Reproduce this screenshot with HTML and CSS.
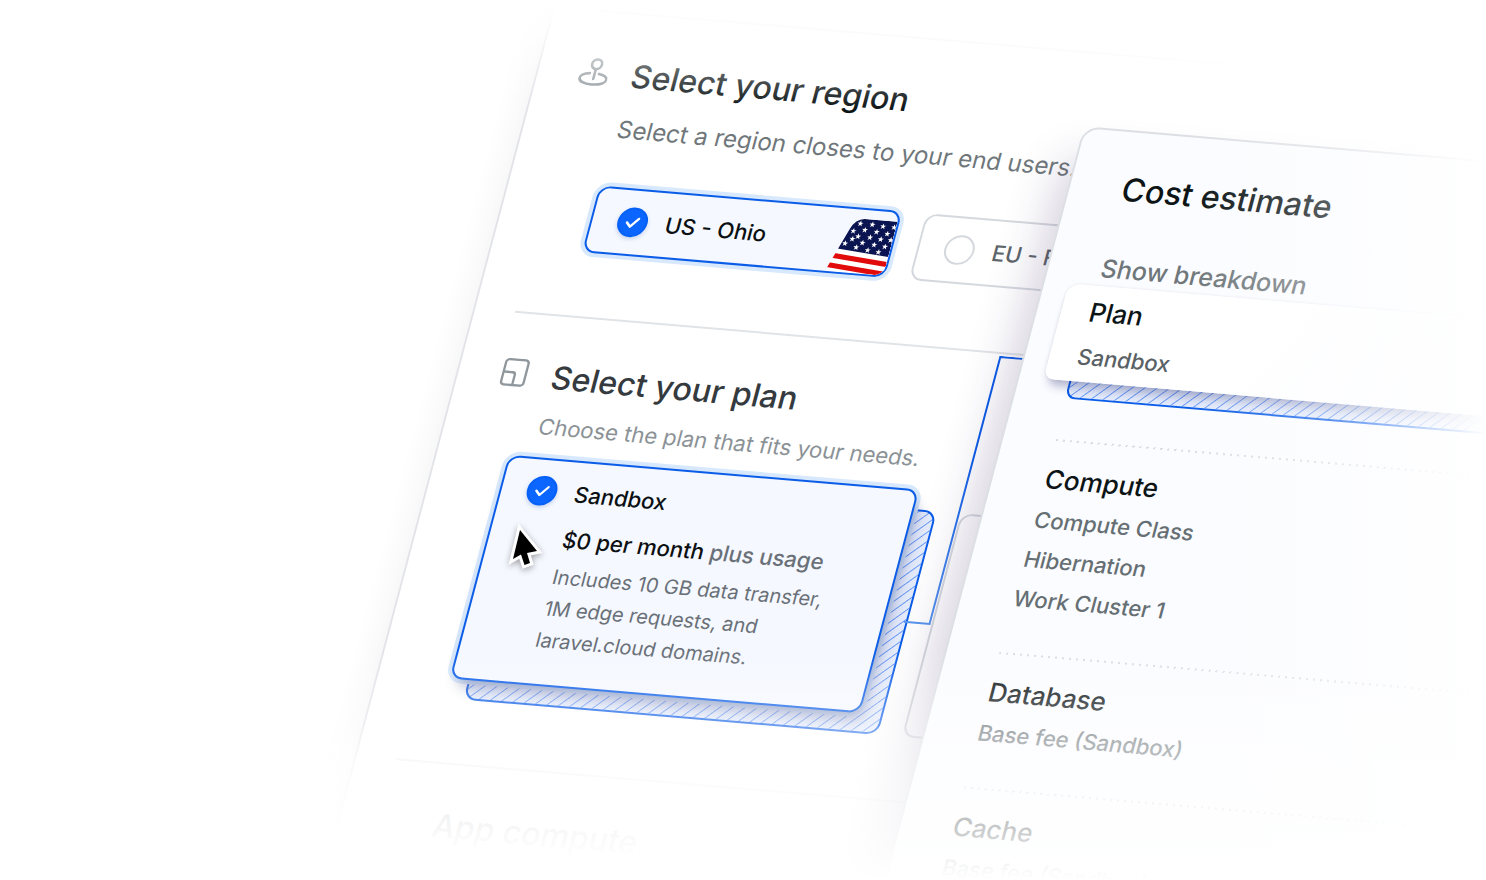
FILE: index.html
```
<!DOCTYPE html>
<html lang="en">
<head>
  <meta charset="UTF-8">
  <meta name="viewport" content="width=device-width, initial-scale=1.0">
  <title>Create environment</title>
  <link rel="stylesheet" href="styles.css">
</head>
<body>
  <div class="scene">

    <main class="plane">
      <form class="setup">
        <section class="step">
          <svg class="step-icon" viewBox="0 0 28 28" fill="none" stroke="#8f979c" stroke-width="2.4" stroke-linecap="round">
            <circle cx="15" cy="7" r="4.600"/>
            <path d="M15 12v9"/>
            <path d="M10.500 15.800C5.500 16.500 2.200 18.400 2.200 20.900c0 3.200 5.400 5.300 12.500 5.300s12.500-2.100 12.500-5.300c0-2.500-3.200-4.400-8.200-5.100"/>
          </svg>
          <div class="step-body">
            <h2>Select your region</h2>
            <p class="hint hint-large">Select a region closes to your end users.</p>
            <div class="cards">
              <label class="card region selected">
                <span class="radio">
                  <input type="radio" name="region" checked>
                  <svg viewBox="0 0 30 30" fill="none" stroke="#fff" stroke-width="2.4" stroke-linecap="round" stroke-linejoin="round"><path d="M9.500 15.500l4 4 7-8.500"/></svg>
                </span>
                <span class="name">US - Ohio</span>
                <svg class="flag" viewBox="0 0 60 58">
                  <defs>
                    <path id="star" d="M0-3.200L.8-1 3-1 1.200.4 1.900 2.600 0 1.300-1.900 2.600-1.200.4-3-1-.8-1z" fill="#fff"/>
                    <clipPath id="flag-shape"><path d="M2 56L15 14Q18 4 27 3L60 3V58H2Z"/></clipPath>
                  </defs>
                  <g clip-path="url(#flag-shape)">
                    <path fill="#fff" d="M0 0h60v58H0z"/>
                    <path fill="#0a1450" d="M0 0h60v39L0 34z"/>
                    <path fill="#e20b0b" d="M0 39l60 5v5L0 44zM0 49l60 5v5L0 54z"/>
                    <g>
                      <use href="#star" x="24" y="8"/><use href="#star" x="36" y="8"/><use href="#star" x="47" y="9"/><use href="#star" x="58" y="9"/>
                      <use href="#star" x="19" y="16"/><use href="#star" x="30" y="14"/><use href="#star" x="42" y="15"/><use href="#star" x="53" y="16"/>
                      <use href="#star" x="25" y="21"/><use href="#star" x="37" y="21"/><use href="#star" x="48" y="22"/><use href="#star" x="58" y="22"/>
                      <use href="#star" x="14" y="29"/><use href="#star" x="20" y="24"/><use href="#star" x="31" y="27"/><use href="#star" x="43" y="28"/><use href="#star" x="54" y="29"/>
                      <use href="#star" x="26" y="32"/><use href="#star" x="38" y="34"/><use href="#star" x="49" y="35"/>
                    </g>
                  </g>
                </svg>
              </label>
              <label class="card region">
                <span class="radio">
                  <input type="radio" name="region">
                </span>
                <span class="name">EU - Frankfurt</span>
              </label>
            </div>
          </div>
        </section>

        <section class="step">
          <svg class="step-icon" viewBox="0 0 28 28" fill="none" stroke="#8f979c" stroke-width="2.200" stroke-linejoin="round">
            <rect x="4" y="1.500" width="21" height="24" rx="3"/>
            <path d="M4 13.500h8.500a2.500 2.500 0 0 1 2.500 2.500v9.500"/>
          </svg>
          <div class="step-body">
            <h2 class="soft">Select your plan</h2>
            <p class="hint">Choose the plan that fits your needs.</p>
            <div class="cards">
              <div class="slot hatch">
                <label class="card plan selected">
                  <span class="radio">
                    <input type="radio" name="plan" checked>
                    <svg viewBox="0 0 30 30" fill="none" stroke="#fff" stroke-width="2.4" stroke-linecap="round" stroke-linejoin="round"><path d="M9.500 15.500l4 4 7-8.500"/></svg>
                  </span>
                  <span class="plan-text">
                    <span class="name">Sandbox</span>
                    <span class="price"><strong>$0 per month</strong> plus usage</span>
                    <span class="desc">Includes 10 GB data transfer,<br>1M edge requests, and<br>laravel.cloud domains.</span>
                  </span>
                </label>
              </div>
              <div class="slot card"></div>
            </div>
          </div>
          <svg class="connector" viewBox="0 0 110 280" fill="none" stroke-width="2">
            <defs>
              <linearGradient id="line" gradientUnits="userSpaceOnUse" x1="0" y1="100" x2="0" y2="280">
                <stop offset="0" stop-color="#0b5de8"/>
                <stop offset="1" stop-color="#5c97ee"/>
              </linearGradient>
            </defs>
            <path d="M0 273H26V1H110" stroke="url(#line)"/>
          </svg>
        </section>

        <section class="step">
          <span class="step-icon"></span>
          <div class="step-body">
            <h2>App compute</h2>
          </div>
        </section>
      </form>
    </main>

    <div class="fade fade-setup"></div>

    <div class="plane plane-front">
      <aside class="cost">
        <h2>Cost estimate</h2>
        <a class="toggle" href="#breakdown">Show breakdown</a>
        <div class="highlight" id="breakdown">
          <div class="highlight-card">
            <h3>Plan</h3>
            <p class="highlight-value">Sandbox</p>
          </div>
          <div class="highlight-base hatch"></div>
        </div>
        <section class="group">
          <h3>Compute</h3>
          <ul>
            <li>Compute Class</li>
            <li>Hibernation</li>
            <li>Work Cluster 1</li>
          </ul>
        </section>
        <section class="group">
          <h3>Database</h3>
          <ul>
            <li>Base fee (Sandbox)</li>
          </ul>
        </section>
        <section class="group">
          <h3>Cache</h3>
          <ul>
            <li>Base fee (Sandbox)</li>
          </ul>
        </section>
      </aside>
    </div>

    <div class="fade fade-all"></div>

    <svg class="cursor" viewBox="0 0 40 50">
      <path d="M13 7L6 36 14 31.500 17.500 42 23 40 20 30 30 28z" fill="#000" stroke="#fff" stroke-width="6" paint-order="stroke"/>
    </svg>
  </div>
</body>
</html>
```
FILE: styles.css
```
* {
  box-sizing: border-box;
}
body {
  margin: 0;
  font-family: Inter, "Liberation Sans", sans-serif;
  color: #0c1416;
  background-color: #fff;
}
h2, h3, p, ul {
  margin: 0;
  padding: 0;
}
h2 {
  font-size: 32px;
  line-height: 40px;
  font-weight: 500;
}
.scene {
  position: relative;
  height: 100vh;
  overflow: hidden;
}

/* both layers lie on the same tilted plane */
.plane {
  position: absolute;
  top: 0;
  left: 555px;
  width: 100%;
  transform: rotate(4.85deg) skewX(-10deg);
  transform-origin: 0 0;
  white-space: nowrap;
}

/* setup form */
.setup {
  margin-top: -60px;
  padding: 66px 0 200px 40px;
  background-color: #fff;
  border-left: 2px solid #e2e4e8;
  box-shadow: -4px 10px 30px rgba(60, 50, 90, 0.06);
}
.step {
  position: relative;
  display: grid;
  grid-template-columns: 30px 1fr;
  gap: 20px;
  padding: 42px 0 64px;
  border-top: 2px solid #e1e4e7;
}
.step:first-child {
  border-image: linear-gradient(90deg, #e1e4e7, rgba(225, 228, 231, 0) 650px) 1;
}
.step-icon {
  width: 30px;
  height: 30px;
  margin-top: 3px;
}
.step h2,
.hint {
  padding-left: 3px;
}
.soft {
  color: #343a3e;
}
.hint {
  margin-top: 14px;
  font-size: 22px;
  line-height: 30px;
  color: #8b9296;
}
.hint-large {
  margin-top: 19px;
  font-size: 24px;
  color: #6f777b;
}
.cards {
  display: flex;
  gap: 24px;
  margin-top: 36px;
}
.hint-large + .cards {
  margin-top: 42px;
}
.card {
  display: flex;
  gap: 18px;
  border: 2px solid #d5d9de;
  border-radius: 12px;
  background-color: #fff;
}
.selected {
  border-color: #0b5de8;
  background-color: #f5f8ff;
  box-shadow: 0 0 0 4px #d8e9fd;
}
.region {
  position: relative;
  flex: 0 0 304px;
  height: 68px;
  align-items: center;
  padding-left: 25px;
  overflow: clip;
}
.radio {
  display: grid;
  flex: none;
  width: 30px;
  height: 30px;
}
.radio > * {
  grid-area: 1 / 1;
}
.radio svg {
  z-index: 1;
  pointer-events: none;
}
.radio input {
  appearance: none;
  width: 30px;
  height: 30px;
  margin: 0;
  border: 2px solid #d5d9de;
  border-radius: 50%;
  background-color: #fff;
}
.radio input:checked {
  border-color: #0560f5;
  background-color: #0a66ff;
  box-shadow: 0 2px 4px rgba(10, 60, 160, 0.2);
}
.name {
  font-size: 22px;
  line-height: 32px;
  font-weight: 500;
  color: #5d666b;
}
.selected .name {
  color: #0c1012;
}
.flag {
  position: absolute;
  right: 0;
  bottom: 0;
  width: 60px;
  height: 58px;
}
.slot {
  flex: 0 0 410px;
  height: 228px;
  border-radius: 12px;
}
.hatch {
  border: 2px solid #0b5de8;
  background: repeating-linear-gradient(135deg, #6597f7 0, #e4ebfc 1px 7px, #6597f7 8px);
}
.plan {
  position: relative;
  top: -22px;
  left: -21px;
  width: 412px;
  height: 228px;
  padding: 16px 0 0 25px;
  box-shadow: 6px 10px 14px -3px rgba(30, 40, 110, 0.4), 0 0 0 4px #d8e9fd;
}
.plan-text {
  display: flex;
  flex-direction: column;
}
.price {
  margin-top: 14px;
  font-size: 22px;
  line-height: 32px;
  font-weight: 500;
  color: #6a7078;
}
.price strong {
  font-weight: 500;
  color: #0c1012;
}
.desc {
  margin-top: 6px;
  font-size: 20px;
  line-height: 32px;
  color: #6a7078;
}
.connector {
  position: absolute;
  top: 2px;
  left: 462px;
  width: 110px;
  height: 280px;
}

/* cost estimate */
.plane-front {
  padding: 81px 0 0 552px;
}
.cost {
  min-height: 900px;
  padding: 38px 0 0 52px;
  border: 2px solid #dcdfe4;
  border-radius: 16px;
  background-color: #fbfcff;
  box-shadow: -10px 34px 44px rgba(50, 30, 90, 0.2);
}
.toggle {
  display: block;
  margin-top: 42px;
  font-size: 25px;
  line-height: 36px;
  font-weight: 500;
  color: #6f777b;
  text-decoration: none;
}
.highlight {
  position: relative;
  margin-left: -28px;
}
.highlight-card {
  position: relative;
  z-index: 1;
  height: 97px;
  padding: 6px 0 0 28px;
  border-radius: 12px 0 0 10px;
  background: linear-gradient(120deg, #fff 200px, #fbfcff 360px);
  box-shadow: 0 0 3px rgba(30, 40, 80, 0.12), 3px 8px 10px -2px rgba(30, 40, 110, 0.32);
}
.highlight-value {
  margin-top: 4px;
  font-size: 22px;
  line-height: 40px;
  font-weight: 500;
  color: #596165;
}
.highlight-base {
  height: 36px;
  margin: -18px 0 0 26px;
  border-radius: 0 0 0 10px;
}
h3 {
  font-size: 26px;
  line-height: 42px;
  font-weight: 500;
}
.group {
  margin-top: 41px;
  padding-top: 18px;
}
.group + .group {
  margin-top: 35px;
}
.group::before {
  content: "";
  display: block;
  height: 2px;
  margin-top: -18px;
  margin-bottom: 18px;
  background: repeating-linear-gradient(90deg, #d9dce0 0 2px, transparent 2px 7px);
}
.group ul {
  list-style: none;
  font-size: 22px;
  line-height: 40px;
  font-weight: 500;
  color: #666f73;
}

.fade {
  position: absolute;
  inset: 0;
  pointer-events: none;
}
.fade-setup {
  background:
    linear-gradient(to bottom, #fff 0, rgba(255, 255, 255, 0.9) 20px, rgba(255, 255, 255, 0.35) 70px, rgba(255, 255, 255, 0) 110px),
    linear-gradient(to top, #fff 0, rgba(255, 255, 255, 0.88) 45px, rgba(255, 255, 255, 0.6) 110px, rgba(255, 255, 255, 0) 155px);
}
.fade-all {
  background:
    linear-gradient(to top, #fff 0, rgba(255, 255, 255, 0.78) 50px, rgba(255, 255, 255, 0.5) 135px, rgba(255, 255, 255, 0) 230px),
    linear-gradient(to left, #fff 0, rgba(255, 255, 255, 0.7) 70px, rgba(255, 255, 255, 0.3) 160px, rgba(255, 255, 255, 0) 300px);
}
.cursor {
  position: absolute;
  top: 523px;
  left: 507px;
  width: 40px;
  height: 50px;
  filter: drop-shadow(0 2px 3px rgba(0, 0, 0, 0.35));
}
```
